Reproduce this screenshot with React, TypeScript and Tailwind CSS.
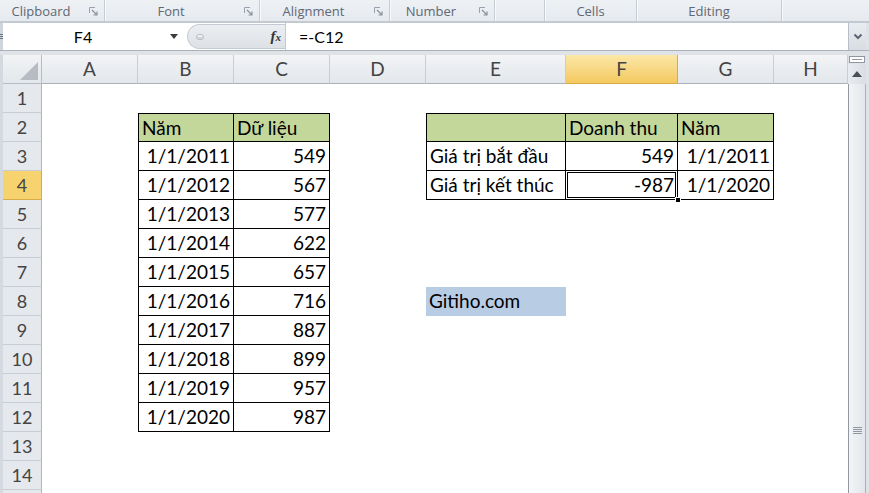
import React from 'react';
import clsx from 'clsx';

type CellDef = { t?: string; a?: 'l' | 'r'; bg?: 'green' | 'blue' };

const COLS = ['A', 'B', 'C', 'D', 'E', 'F', 'G', 'H'];
const ROWS = Array.from({ length: 15 }, (_, i) => i + 1);

const data: Record<string, CellDef> = {
  B2: { t: 'Năm', a: 'l', bg: 'green' },
  C2: { t: 'Dữ liệu', a: 'l', bg: 'green' },
  E2: { t: '', a: 'l', bg: 'green' },
  F2: { t: 'Doanh thu', a: 'l', bg: 'green' },
  G2: { t: 'Năm', a: 'l', bg: 'green' },
  E3: { t: 'Giá trị bắt đầu', a: 'l' },
  F3: { t: '549', a: 'r' },
  G3: { t: '1/1/2011', a: 'r' },
  E4: { t: 'Giá trị kết thúc', a: 'l' },
  F4: { t: '-987', a: 'r' },
  G4: { t: '1/1/2020', a: 'r' },
  E8: { t: 'Gitiho.com', a: 'l', bg: 'blue' },
};
const vals = [549, 567, 577, 622, 657, 716, 887, 899, 957, 987];
vals.forEach((v, i) => {
  data['B' + (i + 3)] = { t: `1/1/${2011 + i}`, a: 'r' };
  data['C' + (i + 3)] = { t: String(v), a: 'r' };
});

function tableInfo(c: string, r: number) {
  const ci = COLS.indexOf(c);
  if (ci >= 1 && ci <= 2 && r >= 2 && r <= 12) return { inT: true, first: ci === 1, top: r === 2 };
  if (ci >= 4 && ci <= 6 && r >= 2 && r <= 4) return { inT: true, first: ci === 4, top: r === 2 };
  return { inT: false, first: false, top: false };
}

function Launcher() {
  return (
    <svg width="9" height="9" viewBox="0 0 9 9" className="shrink-0">
      <path d="M0.5 6V0.5H6" stroke="#9aa1aa" strokeWidth="1" fill="none" />
      <path d="M3 3L7.5 7.5M8 4.5V8H4.5" stroke="#8a929c" strokeWidth="1.2" fill="none" />
    </svg>
  );
}

function Group({ label, w, launcher }: { label: string; w: string; launcher?: boolean }) {
  return (
    <div className={clsx('flex items-center h-full border-r border-[#c7cdd4] shadow-[1px_0_0_#f7f9fb]', w)}>
      <div className="flex-1 text-center pt-[1px]">{label}</div>
      {launcher && (
        <div className="w-[22px] flex justify-center pt-[2px]">
          <Launcher />
        </div>
      )}
    </div>
  );
}

export default function App() {
  return (
    <div className="w-[869px] h-[493px] overflow-hidden bg-[#dfe3e8] flex flex-col font-['Lato',sans-serif]">
      {/* Ribbon group labels */}
      <div className="h-[23px] shrink-0 flex bg-gradient-to-b from-[#eef1f4] to-[#e6e9ee] border-b-2 border-[#c3c9d0] text-[13px] text-[#5f6873] font-['Open_Sans',sans-serif] leading-none">
        <Group label="Clipboard" w="w-[105px]" launcher />
        <Group label="Font" w="w-[155px]" launcher />
        <Group label="Alignment" w="w-[130px]" launcher />
        <Group label="Number" w="w-[105px]" launcher />
        <Group label="" w="w-[50px]" />
        <Group label="Cells" w="w-[92px]" />
        <Group label="Editing" w="w-[145px]" />
        <div className="flex-1" />
      </div>

      {/* Formula bar */}
      <div className="h-[28px] shrink-0 flex border-b border-[#a9b1bb] bg-white">
        <div className="w-[3px] bg-[#cfd5dc] flex flex-col justify-center gap-[1px]">
          <div className="h-[1px] bg-[#6a7480]" />
          <div className="h-[1px] bg-[#6a7480]" />
          <div className="h-[1px] bg-[#6a7480]" />
        </div>
        <div className="w-[160px] flex items-center justify-center text-[16px] text-black">F4</div>
        <div className="w-[22px] flex items-center justify-center">
          <svg width="8" height="5" viewBox="0 0 8 5">
            <path d="M0 0H8L4 5Z" fill="#3c3c3c" />
          </svg>
        </div>
        <div className="w-[98px] ml-[2px] my-[1px] flex items-center rounded-l-full bg-gradient-to-b from-[#eceef1] to-[#dde1e6] border border-[#c4cad1] border-r-0">
          <div className="w-[8px] h-[6px] ml-[8px] rounded-full bg-gradient-to-b from-[#f7f8fa] to-[#c9ced4] border border-[#b9c0c7]" />
          <div className="flex-1" />
          <span className="mr-[4px] font-['Liberation_Serif',serif] italic font-bold text-[15px] text-[#333] leading-none">
            f<span className="text-[11px]">x</span>
          </span>
        </div>
        <div className="w-px bg-[#c4cad1]" />
        <div className="flex-1 flex items-center pl-[13px] text-[16px] text-black">=-C12</div>
        <div className="w-[18px] bg-gradient-to-b from-[#e9ecf0] to-[#d9dde3] border-l border-[#b7bec7] flex items-center justify-center">
          <svg width="10" height="7" viewBox="0 0 10 7">
            <path d="M1.5 1.5L5 5L8.5 1.5" stroke="#5d6673" strokeWidth="2" fill="none" />
          </svg>
        </div>
        <div className="w-[3px] bg-[#dfe3e8]" />
      </div>

      <div className="h-[4px] shrink-0" />

      {/* Sheet */}
      <div className="flex flex-1 min-h-0">
        <div className="w-[3px] bg-[#d3d9df]" />
        <div className="w-[845px] overflow-hidden bg-white">
          <div className="grid grid-cols-[39px_96px_96px_96px_96px_140px_112px_96px_74px]">
            {/* header row */}
            <div className="h-[29px] bg-gradient-to-b from-[#f1f3f5] to-[#e3e7eb] border-r border-b border-[#b4bcc6] flex items-end justify-end pr-[3px] pb-[3px]">
              <svg width="18" height="18" viewBox="0 0 18 18">
                <path d="M18 0V18H0Z" fill="#b7bcc3" />
              </svg>
            </div>
            {COLS.map((c) =>
              c === 'F' ? (
                <div
                  key={c}
                  className="h-[29px] bg-gradient-to-b from-[#fbe7a6] to-[#f4c95e] border-r border-b border-[#d9ad45] text-center text-[19px] leading-[28px] text-[#444]"
                >
                  {c}
                </div>
              ) : (
                <div
                  key={c}
                  className="h-[29px] bg-gradient-to-b from-[#f2f4f6] to-[#e3e7eb] border-r border-b border-r-[#c9ced5] border-b-[#a9b1bb] text-center text-[19px] leading-[28px] text-[#444]"
                >
                  {c}
                </div>
              )
            )}
            {ROWS.map((r) => (
              <React.Fragment key={r}>
                <div
                  className={clsx(
                    'h-[29px] border-b border-r text-center text-[18px] leading-[28px] text-[#444]',
                    r === 4
                      ? 'bg-[#f7d36f] border-b-[#d9ad45] border-r-[#d9ad45]'
                      : 'bg-[#e5e8ec] border-b-[#c8cdd4] border-r-[#aeb5bf]'
                  )}
                >
                  {r <= 14 ? r : ''}
                </div>
                {COLS.map((c) => {
                  const key = c + r;
                  const d = data[key];
                  const ti = tableInfo(c, r);
                  return (
                    <div
                      key={key}
                      className={clsx(
                        'relative h-[29px] leading-[28px] whitespace-nowrap text-[19px] text-black',
                        d?.a === 'r' ? 'text-right pr-[3px]' : 'pl-[3px]',
                        d?.bg === 'green' && 'bg-[#c4d79b]',
                        d?.bg === 'blue' && 'bg-[#b8cce4]',
                        ti.inT && 'border-r border-b border-black',
                        ti.inT && ti.first && 'border-l',
                        ti.inT && ti.top && 'border-t'
                      )}
                    >
                      {d?.t}
                      {key === 'F4' && (
                        <>
                          <div className="absolute left-[1px] top-[1px] right-[1px] bottom-[1px] border border-black" />
                          <div className="absolute right-[-4px] bottom-[-4px] w-[6px] h-[6px] bg-black border border-white z-10" />
                        </>
                      )}
                    </div>
                  );
                })}
              </React.Fragment>
            ))}
          </div>
        </div>

        {/* vertical scrollbar */}
        <div className="w-[21px] flex flex-col pr-[3px]">
          <div className="h-[9px] pt-[1px] px-[1px]">
            <div className="h-[7px] bg-white border border-[#8e97a2] flex items-center px-[2px]">
              <div className="h-px w-full bg-[#8e97a2]" />
            </div>
          </div>
          <div className="h-[20px] bg-gradient-to-r from-[#e8ebef] to-[#dadee4] flex items-center justify-center">
            <svg width="10" height="6" viewBox="0 0 10 6">
              <path d="M0 6H10L5 0Z" fill="#4a4f56" />
            </svg>
          </div>
          <div className="flex-1 border-l border-r border-l-[#8f98a3] border-r-[#a8b0ba] bg-gradient-to-r from-[#f3f5f7] to-[#e2e6eb] flex flex-col items-center">
            <div className="h-[343px] shrink-0" />
            <div className="flex flex-col gap-[1px] w-[9px]">
              <div className="h-px bg-[#8e96a0]" />
              <div className="h-px bg-[#8e96a0]" />
              <div className="h-px bg-[#8e96a0]" />
              <div className="h-px bg-[#8e96a0]" />
            </div>
          </div>
        </div>
      </div>
    </div>
  );
}
